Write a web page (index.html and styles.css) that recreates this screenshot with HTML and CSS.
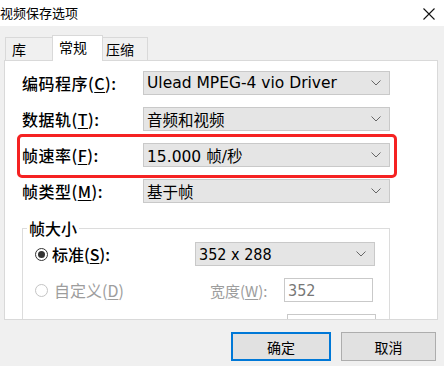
FILE: index.html
```html
<!DOCTYPE html>
<html>
<head>
<meta charset="utf-8">
<link rel="stylesheet" href="styles.css">
</head>
<body>
<div class="window">
  <div class="titlebar">
    <span class="title">视频保存选项</span>
    <svg class="close" width="12" height="12" viewBox="0 0 12 12"><path d="M0.5 0.5 L11.5 11.5 M11.5 0.5 L0.5 11.5" stroke="#111" stroke-width="1.1" fill="none"/></svg>
  </div>
  <div class="body">
    <div class="tabs">
      <div class="tab">库</div>
      <div class="tab active">常规</div>
      <div class="tab">压缩</div>
    </div>
    <div class="panel">
      <div class="rows">
        <div class="row">
          <span class="label">编码程序(<u>C</u>):</span>
          <div class="combo"><span class="val">Ulead MPEG-4 vio Driver</span><svg class="chev" width="10" height="6" viewBox="0 0 10 6"><path d="M0.5 0.5 L5 5 L9.5 0.5" stroke="#666" fill="none"/></svg></div>
        </div>
        <div class="row">
          <span class="label">数据轨(<u>T</u>):</span>
          <div class="combo"><span class="val">音频和视频</span><svg class="chev" width="10" height="6" viewBox="0 0 10 6"><path d="M0.5 0.5 L5 5 L9.5 0.5" stroke="#666" fill="none"/></svg></div>
        </div>
        <div class="row">
          <span class="label">帧速率(<u>F</u>):</span>
          <div class="combo"><span class="val">15.000 帧/秒</span><svg class="chev" width="10" height="6" viewBox="0 0 10 6"><path d="M0.5 0.5 L5 5 L9.5 0.5" stroke="#666" fill="none"/></svg></div>
        </div>
        <div class="row">
          <span class="label">帧类型(<u>M</u>):</span>
          <div class="combo"><span class="val">基于帧</span><svg class="chev" width="10" height="6" viewBox="0 0 10 6"><path d="M0.5 0.5 L5 5 L9.5 0.5" stroke="#666" fill="none"/></svg></div>
        </div>
      </div>
      <div class="highlight"></div>
      <fieldset class="group">
        <legend>帧大小</legend>
        <div class="grow">
          <span class="radio checked"></span>
          <span class="rlabel">标准(<u>S</u>):</span>
          <div class="combo small"><span class="val num">352 x 288</span><svg class="chev" width="10" height="6" viewBox="0 0 10 6"><path d="M0.5 0.5 L5 5 L9.5 0.5" stroke="#666" fill="none"/></svg></div>
        </div>
        <div class="grow">
          <span class="radio disabled"></span>
          <span class="rlabel dim">自定义(<u>D</u>)</span>
          <span class="wlabel dim">宽度(<u>W</u>):</span>
          <div class="input"><span class="num dimnum">352</span></div>
        </div>
        <div class="grow">
          <span class="spacer"></span>
          <div class="input"></div>
        </div>
      </fieldset>
    </div>
    <div class="buttons">
      <button class="btn default">确定</button>
      <button class="btn">取消</button>
    </div>
  </div>
</div>
</body>
</html>
```
FILE: styles.css
```css
* { box-sizing: border-box; }
html, body { margin: 0; padding: 0; }
body {
  width: 444px;
  height: 366px;
  overflow: hidden;
  background: #f0f0f0;
  font-family: "DejaVu Sans", "Noto Sans CJK SC", sans-serif;
  color: #000;
}
.window { width: 444px; height: 366px; display: flex; flex-direction: column; }
.titlebar {
  height: 26px;
  background: #fff;
  display: flex;
  align-items: center;
  justify-content: space-between;
  padding: 0 9px 0 0;
}
.title {
  font-family: "Noto Sans CJK SC", sans-serif;
  font-size: 13px;
  margin-left: 0;
  margin-top: -1px;
}
.close { margin-top: 1px; }
.body { flex: 1; display: flex; flex-direction: column; padding: 9px 6px 0 4px; }
.tabs { display: flex; align-items: flex-end; height: 25px; padding-left: 1px; position: relative; z-index: 2; }
.tab {
  font-family: "Noto Sans CJK SC", sans-serif;
  font-size: 14px;
  height: 23px;
  line-height: 22px;
  border: 1px solid #d9d9d9;
  border-bottom: none;
  background: #f0f0f0;
  padding: 0 6px;
  width: 47px;
}
.tab:first-child { border-right: none; }
.tab.active {
  background: #fff;
  height: 26px;
  line-height: 22px;
  width: 51px;
  padding-left: 6px;
  margin-bottom: -1px;
}
.tab:last-child { border-left: none; width: 45px; padding-left: 3px; }
.panel {
  position: relative;
  background: #fff;
  border: 1px solid #d9d9d9;
  height: 260px;
  overflow: hidden;
  padding: 10px 0 0 17px;
}
.rows { display: flex; flex-direction: column; gap: 12px; }
.row { display: flex; align-items: center; height: 24px; }
.label {
  width: 121px;
  font-size: 16px;
  font-family: "Noto Sans CJK SC", sans-serif;
  font-weight: 500;
  letter-spacing: 0.5px;
}
.label u, .rlabel u, .wlabel u { text-decoration-thickness: 1px; text-underline-offset: 2px; }
.combo {
  width: 247px;
  height: 24px;
  background: #e5e5e5;
  border: 1px solid #c9c9c9;
  display: flex;
  align-items: center;
  justify-content: space-between;
  padding: 0 8px 0 3px;
}
.val { font-size: 15.5px; white-space: nowrap; font-family: "DejaVu Sans", "Noto Sans CJK SC", sans-serif; }
.chev { flex: none; }
.highlight {
  position: absolute;
  left: 12px;
  top: 73px;
  width: 380px;
  height: 44px;
  border: 3px solid #f52222;
  border-radius: 5px;
}
.group {
  margin: 13px 0 0 0;
  width: 368px;
  border: 1px solid #dcdcdc;
  padding: 2px 0 0 0;
  height: 130px;
}
.group legend {
  font-family: "Noto Sans CJK SC", sans-serif;
  font-size: 16px;
  font-weight: 500;
  padding: 0 2px;
  margin-left: 4px;
}
.grow { display: flex; align-items: center; height: 24px; margin-bottom: 12px; }
.radio {
  width: 13px;
  height: 13px;
  border-radius: 50%;
  margin-left: 12px;
  margin-right: 4px;
  flex: none;
  border: 1px solid #333;
  position: relative;
}
.radio.checked::after {
  content: "";
  position: absolute;
  left: 2px; top: 2px;
  width: 7px; height: 7px;
  border-radius: 50%;
  background: #333;
}
.radio.disabled { border-color: #c4c4c4; }
.rlabel {
  font-family: "Noto Sans CJK SC", sans-serif;
  font-size: 16px;
  font-weight: 500;
  width: 143px;
}
.dim { color: #9d9d9d; }
.rlabel.dim { font-weight: 400; }
.wlabel {
  font-family: "Noto Sans CJK SC", sans-serif;
  font-size: 15px;
  width: 74px;
  margin-left: 15px;
}
.rlabel.dim { width: 141px; margin-left: 2px; }
.combo.small { width: 180px; }
.num { font-family: "Liberation Sans Narrow", "DejaVu Sans Condensed", sans-serif; font-size: 16px; }
.dimnum { color: #777; }
.input {
  width: 89px;
  height: 24px;
  border: 1px solid #c9c9c9;
  background: #fff;
  padding: 1px 3px;
  display: flex;
  align-items: center;
}
.spacer { width: 264px; }
.buttons {
  display: flex;
  justify-content: flex-end;
  gap: 10px;
  padding: 12px 2px 0 0;
}
.btn {
  font-family: "Noto Sans CJK SC", sans-serif;
  font-size: 14px;
  height: 29px;
  width: 95px;
  background: #e1e1e1;
  border: 1px solid #adadad;
  color: #000;
  padding: 0;
}
.btn.default { border: 2px solid #0078d7; width: 100px; }
```
